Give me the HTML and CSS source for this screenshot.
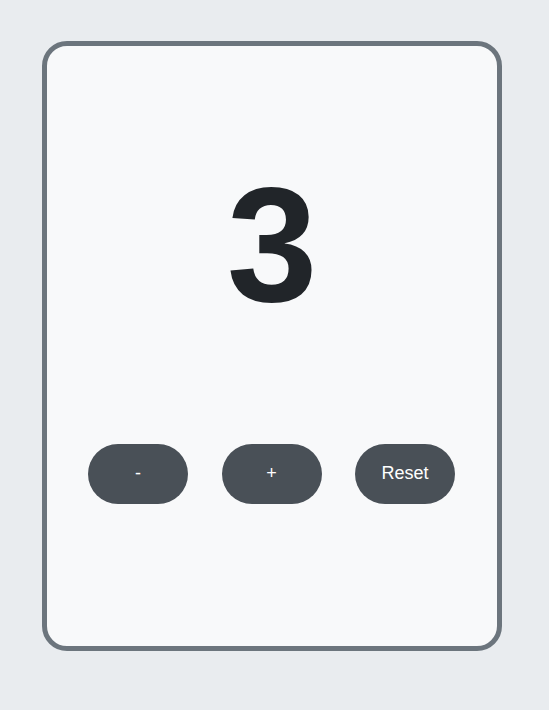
FILE: index.html
```html
<!DOCTYPE html>
<html lang="en">
<head>
<meta charset="utf-8">
<title>Counter</title>
<link rel="stylesheet" href="styles.css">
</head>
<body>
  <main class="card">
    <div class="count">3</div>
    <div class="controls">
      <button class="btn">-</button>
      <button class="btn">+</button>
      <button class="btn">Reset</button>
    </div>
  </main>
</body>
</html>
```

FILE: styles.css
```css
html, body {
  margin: 0;
  padding: 0;
  background: #e9ecef;
  font-family: "Liberation Sans", Arial, sans-serif;
}
body {
  padding: 41px 0 0 42px;
  height: 710px;
  box-sizing: border-box;
}
.card {
  box-sizing: border-box;
  width: 460px;
  height: 610px;
  border: 5px solid #6c757d;
  border-radius: 25px;
  background: #f8f9fa;
  display: flex;
  flex-direction: column;
  align-items: center;
  padding-top: 117px;
}
.count {
  font-size: 163px;
  line-height: 1;
  font-weight: 700;
  color: #212529;
  text-align: center;
}
.controls {
  display: flex;
  gap: 33.5px;
  margin-top: 118px;
  padding-left: 41px;
  box-sizing: border-box;
  justify-content: flex-start;
  width: 100%;
}
.btn {
  width: 100px;
  height: 60px;
  border: none;
  border-radius: 30px;
  background: #495057;
  color: #ffffff;
  font-family: "Liberation Sans", Arial, sans-serif;
  font-size: 18px;
  padding: 0 0 2px 0;
  cursor: pointer;
}
```
